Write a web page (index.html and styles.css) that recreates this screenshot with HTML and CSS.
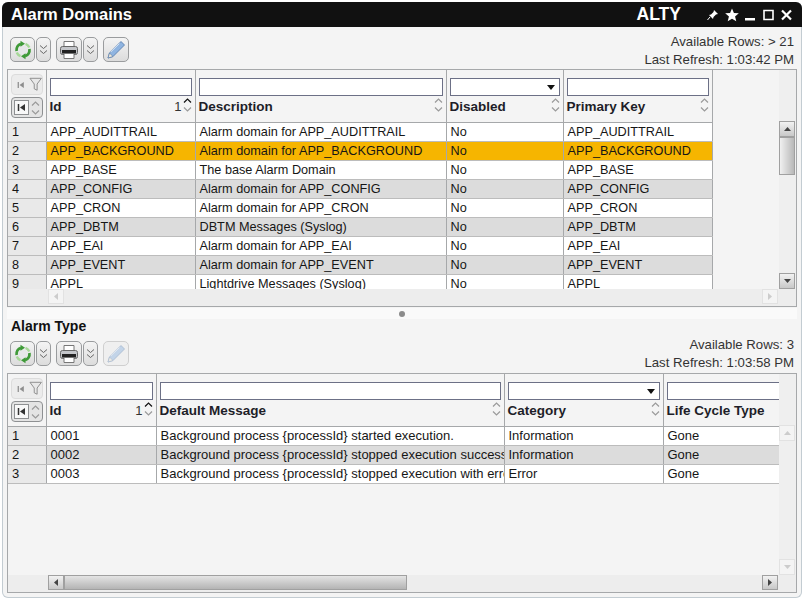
FILE: index.html
```html
<!doctype html>
<html>
<head>
<meta charset="utf-8">
<title>Alarm Domains</title>
<link rel="stylesheet" href="styles.css">
</head>
<body>
<svg class="defs" width="0" height="0">
	<defs>
		<symbol id="i-refresh" viewBox="0 0 20 20">
			<circle cx="10" cy="10" r="4.500" fill="#e6e7e8"/>
			<path d="M3.600 11A6.500 6.500 0 0 1 8 3.800" fill="none" stroke="#3f9a38" stroke-width="2.800"/>
			<path d="M7.500 .8l4.500 3-4.500 3z" fill="#3f9a38"/>
			<path d="M16.400 9A6.500 6.500 0 0 1 12 16.200" fill="none" stroke="#3f9a38" stroke-width="2.800"/>
			<path d="M12.500 19.200L8 16.200l4.500-3z" fill="#3f9a38"/>
			<path d="M12.500 3.900A6.500 6.500 0 0 1 16.300 7.500" fill="none" stroke="#a6d898" stroke-width="2.400"/>
			<path d="M7.500 16.100A6.500 6.500 0 0 1 3.700 12.500" fill="none" stroke="#a6d898" stroke-width="2.400"/>
		</symbol>
		<symbol id="i-print" viewBox="0 0 20 20">
			<path d="M5 1.500h10v6H5z" fill="#fff" stroke="#777"/>
			<rect x="1.500" y="6.500" width="17" height="8" rx="2" fill="#c4c6ca" stroke="#666"/>
			<rect x="3" y="10" width="14" height="3.500" fill="#222"/>
			<path d="M5 13.500h10v5H5z" fill="#fff" stroke="#777"/>
		</symbol>
		<symbol id="i-pencil" viewBox="0 0 20 20">
			<path d="M15 1.500l3.500 3.500L7 16.500l-5 1.500 1.500-5z" fill="#8fb4e0" stroke="#4f76a8" stroke-width=".8"/>
			<path d="M3.500 13L7 16.500 2 18z" fill="#efe8d8" stroke="#4f76a8" stroke-width=".6"/>
			<path d="M13.500 3.500L4.800 12" stroke="#d4e4f6" fill="none"/>
		</symbol>
		<symbol id="i-dbl" viewBox="0 0 9 11">
			<path d="M1 1.500l3.500 3 3.500-3M1 6.500l3.500 3 3.500-3" fill="none" stroke="#666" stroke-width="1"/>
		</symbol>
		<symbol id="i-funnel" viewBox="0 0 14 15">
			<path d="M1 1h12L8.500 7v6.500l-3-1.500V7z" fill="#e8e8e8" stroke="#8c8c8c"/>
		</symbol>
		<symbol id="i-first" viewBox="0 0 9 9">
			<path d="M1.500 1v7" stroke="#333" stroke-width="1.500"/>
			<path d="M8 1v7L3 4.500z" fill="#333"/>
		</symbol>
		<symbol id="i-up" viewBox="0 0 9 5">
			<path d="M1 4.500l3.500-3.500 3.500 3.500" fill="none" stroke="currentColor" stroke-width="1.200"/>
		</symbol>
		<symbol id="i-down" viewBox="0 0 9 5">
			<path d="M1 .5l3.500 3.500 3.500-3.500" fill="none" stroke="currentColor" stroke-width="1.200"/>
		</symbol>
		<symbol id="i-tri-up" viewBox="0 0 7 4">
			<path d="M3.500 0 7 4H0z" fill="currentColor"/>
		</symbol>
		<symbol id="i-tri-down" viewBox="0 0 7 4">
			<path d="M3.500 4 7 0H0z" fill="currentColor"/>
		</symbol>
	</defs>
</svg>

<div class="window">
	<div class="titlebar">
		<span class="title">Alarm Domains</span>
		<span class="user">ALTY</span>
		<div class="win-icons">
			<svg width="12" height="12" viewBox="0 0 12 12"><path d="M7 1l4 4-2 .5-2.500 2.500-.5 2-4-4 2-.5L6.500 3z" fill="#fff"/><path d="M3 8l-2.500 3" stroke="#fff"/></svg>
			<svg width="14" height="14" viewBox="0 0 16 15"><path d="M8 0l2.200 5.200 5.600.4-4.300 3.600 1.400 5.500L8 11.700 3.100 14.700l1.400-5.500L.2 5.600l5.600-.4z" fill="#fff"/></svg>
			<svg class="wi-min" width="11" height="12" viewBox="0 0 11 12"><path d="M0 9h10v2.500H0z" fill="#fff"/></svg>
			<svg class="wi-box" width="11" height="12" viewBox="0 0 11 12"><path d="M1 1.500h9v9H1z" fill="none" stroke="#fff" stroke-width="1.600"/></svg>
			<svg class="wi-box" width="11" height="12" viewBox="0 0 11 12"><path d="M1 1.500l9 9M10 1.500l-9 9" fill="none" stroke="#fff" stroke-width="2.200"/></svg>
		</div>
	</div>

	<div class="toolbar top-toolbar">
		<div class="tools">
			<span class="btn"><svg width="20" height="20"><use href="#i-refresh"/></svg></span>
			<span class="btn small"><svg width="9" height="11"><use href="#i-dbl"/></svg></span>
			<span class="btn gap"><svg width="20" height="20"><use href="#i-print"/></svg></span>
			<span class="btn small"><svg width="9" height="11"><use href="#i-dbl"/></svg></span>
			<span class="btn gap"><svg width="20" height="20"><use href="#i-pencil"/></svg></span>
		</div>
		<div class="info">
			<div>Available Rows: &gt; 21</div>
			<div>Last Refresh: 1:03:42 PM</div>
		</div>
	</div>

	<div class="grid grid-top">
		<div class="grid-main">
			<table class="data">
				<colgroup>
					<col class="c-num"><col class="c-id"><col class="c-desc"><col class="c-dis"><col class="c-key">
				</colgroup>
				<thead>
					<tr>
						<th class="corner">
							<div class="corner-a"><svg width="8" height="8"><use href="#i-first"/></svg><svg width="14" height="15"><use href="#i-funnel"/></svg></div>
							<div class="corner-b"><span class="first-box"><svg width="9" height="9"><use href="#i-first"/></svg></span><span class="spin"><svg width="9" height="5"><use href="#i-up"/></svg><svg width="9" height="5"><use href="#i-down"/></svg></span></div>
						</th>
						<th><div class="filter"></div><div class="label"><span>Id</span><span class="sort"><b>1</b><span class="spin"><svg class="dark" width="9" height="5"><use href="#i-up"/></svg><svg width="9" height="5"><use href="#i-down"/></svg></span></span></div></th>
						<th><div class="filter"></div><div class="label"><span>Description</span><span class="spin"><svg width="9" height="5"><use href="#i-up"/></svg><svg width="9" height="5"><use href="#i-down"/></svg></span></div></th>
						<th><div class="filter select"><i></i></div><div class="label"><span>Disabled</span><span class="spin"><svg width="9" height="5"><use href="#i-up"/></svg><svg width="9" height="5"><use href="#i-down"/></svg></span></div></th>
						<th><div class="filter"></div><div class="label"><span>Primary Key</span><span class="spin"><svg width="9" height="5"><use href="#i-up"/></svg><svg width="9" height="5"><use href="#i-down"/></svg></span></div></th>
					</tr>
				</thead>
				<tbody>
					<tr><td class="num">1</td><td>APP_AUDITTRAIL</td><td>Alarm domain for APP_AUDITTRAIL</td><td>No</td><td>APP_AUDITTRAIL</td></tr>
					<tr class="sel"><td class="num">2</td><td>APP_BACKGROUND</td><td>Alarm domain for APP_BACKGROUND</td><td>No</td><td>APP_BACKGROUND</td></tr>
					<tr><td class="num">3</td><td>APP_BASE</td><td>The base Alarm Domain</td><td>No</td><td>APP_BASE</td></tr>
					<tr class="alt"><td class="num">4</td><td>APP_CONFIG</td><td>Alarm domain for APP_CONFIG</td><td>No</td><td>APP_CONFIG</td></tr>
					<tr><td class="num">5</td><td>APP_CRON</td><td>Alarm domain for APP_CRON</td><td>No</td><td>APP_CRON</td></tr>
					<tr class="alt"><td class="num">6</td><td>APP_DBTM</td><td>DBTM Messages (Syslog)</td><td>No</td><td>APP_DBTM</td></tr>
					<tr><td class="num">7</td><td>APP_EAI</td><td>Alarm domain for APP_EAI</td><td>No</td><td>APP_EAI</td></tr>
					<tr class="alt"><td class="num">8</td><td>APP_EVENT</td><td>Alarm domain for APP_EVENT</td><td>No</td><td>APP_EVENT</td></tr>
					<tr><td class="num">9</td><td>APPL</td><td>Lightdrive Messages (Syslog)</td><td>No</td><td>APPL</td></tr>
				</tbody>
			</table>
		</div>
		<div class="vbar">
			<span class="sb-btn"><svg width="7" height="4"><use href="#i-tri-up"/></svg></span>
			<span class="v-thumb"></span>
			<span class="v-track"></span>
			<span class="sb-btn"><svg width="7" height="4"><use href="#i-tri-down"/></svg></span>
		</div>
		<div class="hbar">
			<span class="sb-btn h off"><svg width="4" height="7" viewBox="0 0 4 7"><path d="M4 0v7L0 3.500z" fill="currentColor"/></svg></span>
			<span class="h-track"></span>
			<span class="sb-btn h off"><svg width="4" height="7" viewBox="0 0 4 7"><path d="M0 0v7l4-3.500z" fill="currentColor"/></svg></span>
		</div>
	</div>

	<div class="splitter"><span class="dot"></span></div>

	<div class="section">Alarm Type</div>

	<div class="toolbar low-toolbar">
		<div class="tools">
			<span class="btn"><svg width="20" height="20"><use href="#i-refresh"/></svg></span>
			<span class="btn small"><svg width="9" height="11"><use href="#i-dbl"/></svg></span>
			<span class="btn gap"><svg width="20" height="20"><use href="#i-print"/></svg></span>
			<span class="btn small"><svg width="9" height="11"><use href="#i-dbl"/></svg></span>
			<span class="btn gap off"><svg width="20" height="20"><use href="#i-pencil"/></svg></span>
		</div>
		<div class="info">
			<div>Available Rows: 3</div>
			<div>Last Refresh: 1:03:58 PM</div>
		</div>
	</div>

	<div class="grid grid-low">
		<div class="grid-main">
			<table class="data">
				<colgroup>
					<col class="c-num"><col class="c-id2"><col class="c-msg"><col class="c-cat"><col class="c-life">
				</colgroup>
				<thead>
					<tr>
						<th class="corner">
							<div class="corner-a"><svg width="8" height="8"><use href="#i-first"/></svg><svg width="14" height="15"><use href="#i-funnel"/></svg></div>
							<div class="corner-b"><span class="first-box"><svg width="9" height="9"><use href="#i-first"/></svg></span><span class="spin"><svg width="9" height="5"><use href="#i-up"/></svg><svg width="9" height="5"><use href="#i-down"/></svg></span></div>
						</th>
						<th><div class="filter"></div><div class="label"><span>Id</span><span class="sort"><b>1</b><span class="spin"><svg class="dark" width="9" height="5"><use href="#i-up"/></svg><svg width="9" height="5"><use href="#i-down"/></svg></span></span></div></th>
						<th><div class="filter"></div><div class="label"><span>Default Message</span><span class="spin"><svg width="9" height="5"><use href="#i-up"/></svg><svg width="9" height="5"><use href="#i-down"/></svg></span></div></th>
						<th><div class="filter select"><i></i></div><div class="label"><span>Category</span><span class="spin"><svg width="9" height="5"><use href="#i-up"/></svg><svg width="9" height="5"><use href="#i-down"/></svg></span></div></th>
						<th class="open"><div class="filter"></div><div class="label"><span>Life Cycle Type</span></div></th>
					</tr>
				</thead>
				<tbody>
					<tr><td class="num">1</td><td>0001</td><td>Background process {processId} started execution.</td><td>Information</td><td class="open">Gone</td></tr>
					<tr class="alt"><td class="num">2</td><td>0002</td><td>Background process {processId} stopped execution successfully.</td><td>Information</td><td class="open">Gone</td></tr>
					<tr><td class="num">3</td><td>0003</td><td>Background process {processId} stopped execution with errors.</td><td>Error</td><td class="open">Gone</td></tr>
				</tbody>
			</table>
		</div>
		<div class="vbar">
			<span class="sb-btn off"><svg width="7" height="4"><use href="#i-tri-up"/></svg></span>
			<span class="v-track"></span>
			<span class="sb-btn off"><svg width="7" height="4"><use href="#i-tri-down"/></svg></span>
		</div>
		<div class="hbar">
			<span class="sb-btn h"><svg width="4" height="7" viewBox="0 0 4 7"><path d="M4 0v7L0 3.500z" fill="currentColor"/></svg></span>
			<span class="h-thumb"></span>
			<span class="h-track"></span>
			<span class="sb-btn h"><svg width="4" height="7" viewBox="0 0 4 7"><path d="M0 0v7l4-3.500z" fill="currentColor"/></svg></span>
		</div>
	</div>
</div>
</body>
</html>
```

FILE: styles.css
```css
body {
	margin: 0;
	background: #fff;
	font: 12.700px "Liberation Sans", Arial, sans-serif;
	color: #1a1a1a;
}
.defs {
	position: absolute;
}
.window {
	width: 800px;
	height: 596px;
	margin: 2px 0 0 2px;
	box-sizing: border-box;
	background: #f4f4f4;
	border: 1px solid #c3ccd2;
	border-top: 0;
	border-radius: 6px;
	padding: 0 4px;
}

/* title */
.titlebar {
	height: 25px;
	margin: 0 -5px;
	padding: 0 10px 0 9px;
	display: flex;
	align-items: center;
	background: #111;
	color: #fff;
	border-radius: 6px 6px 0 0;
}
.title {
	font-size: 16.500px;
	font-weight: bold;
	flex: 1;
}
.user {
	font-size: 17.500px;
	font-weight: bold;
	margin-right: 26px;
}
.win-icons {
	display: flex;
	align-items: center;
	gap: 6px;
}
.wi-box {
	margin-left: 1px;
}

/* toolbars */
.toolbar {
	display: flex;
	justify-content: space-between;
	align-items: flex-start;
}
.top-toolbar {
	height: 42px;
}
.top-toolbar .tools {
	padding-top: 10px;
}
.top-toolbar .info {
	padding-top: 6px;
}
.low-toolbar {
	height: 37px;
}
.low-toolbar .tools {
	padding-top: 5px;
}
.tools {
	display: flex;
	gap: 1px;
	padding-left: 3px;
}
.btn {
	width: 25px;
	height: 25px;
	box-sizing: border-box;
	display: flex;
	align-items: center;
	justify-content: center;
	border: 1px solid #9a9c9e;
	border-radius: 5px;
	background: linear-gradient(#f4f4f4, #dcdcdc);
}
.btn.small {
	width: 15px;
}
.btn.gap {
	margin-left: 4px;
	width: 26px;
}
.btn.off {
	border-color: #cfcfcf;
	background: #efefef;
}
.btn.off svg {
	opacity: .45;
}
.info {
	font-size: 13.200px;
	line-height: 18px;
	text-align: right;
	color: #333;
	padding-right: 3px;
}

/* grids */
.grid {
	border: 1px solid #a6a8aa;
	box-sizing: border-box;
	display: grid;
	grid-template-columns: 771px 17px;
	grid-template-rows: 1fr 17px;
}
.grid-top {
	height: 238px;
}
.grid-low {
	height: 220px;
}
.grid-main {
	overflow: hidden;
}
.data {
	border-collapse: collapse;
	table-layout: fixed;
	width: 704px;
}
.grid-low .data {
	width: 805px;
}
.grid-low td {
	font-size: 13px;
}
.c-num { width: 38px; }
.c-id { width: 149px; }
.c-desc { width: 251px; }
.c-dis { width: 117px; }
.c-key { width: 149px; }
.c-id2 { width: 110px; }
.c-msg { width: 348px; }
.c-cat { width: 159px; }
.c-life { width: 150px; }
.data th,
.data td {
	border-right: 1px solid #a6a8aa;
	padding: 0;
}
.data th {
	height: 52px;
	box-sizing: border-box;
	border-bottom: 1px solid #a6a8aa;
	padding: 8px 3px 0;
	vertical-align: top;
	text-align: left;
}
.data th.corner {
	padding: 4px 3px 0;
}
.data td {
	height: 19px;
	padding: 0 3px 0 4px;
	background: #fff;
	border-bottom: 1px solid #bcbcbc;
	white-space: nowrap;
	overflow: hidden;
	color: #161616;
	box-sizing: border-box;
}
.data tr.alt td {
	background: #dcdcdc;
}
.data tr.sel td {
	background: #f6b500;
}
.data tr td.num {
	background: #e9e9e9;
}
.data .open {
	border-right: 0;
}
.filter {
	height: 18px;
	box-sizing: border-box;
	background: #fff;
	border: 1px solid #6c7086;
	position: relative;
}
.filter.select i {
	position: absolute;
	right: 4px;
	top: 6px;
	border: 4px solid transparent;
	border-top: 5px solid #111;
	border-bottom: 0;
}
.label {
	display: flex;
	justify-content: space-between;
	align-items: center;
	height: 21px;
	font-size: 13.500px;
	font-weight: bold;
	color: #1e1e28;
}
.sort {
	display: flex;
	align-items: center;
	gap: 1px;
}
.sort b {
	font-size: 13px;
	font-weight: normal;
	color: #333;
}
.spin {
	display: flex;
	flex-direction: column;
	gap: 4px;
	color: #9a9a9a;
}
.label .spin {
	margin-top: -4px;
}
.spin svg {
	display: block;
}
.spin .dark {
	color: #111;
}
.corner-a,
.corner-b {
	display: flex;
	align-items: center;
	box-sizing: border-box;
	border-radius: 4px;
	margin: 0 0 2px 0;
	width: 32px;
}
.corner-a {
	height: 21px;
	gap: 4px;
	padding-left: 5px;
	background: #ececec;
	border: 1px solid #dcdcdc;
}
.corner-a svg:first-child {
	opacity: .5;
}
.corner-b {
	height: 21px;
	gap: 2px;
	padding-left: 2px;
	border: 1px solid #8e9092;
	background: #e4e4e4;
}
.first-box {
	width: 15px;
	height: 15px;
	box-sizing: border-box;
	border: 1px solid #8e9092;
	background: #f8f8f8;
	display: flex;
	align-items: center;
	justify-content: center;
}

/* scrollbars */
.vbar {
	display: flex;
	flex-direction: column;
	background: #efefef;
	padding-top: 51px;
}
.sb-btn {
	width: 16px;
	height: 16px;
	flex: none;
	box-sizing: border-box;
	display: flex;
	align-items: center;
	justify-content: center;
	border: 1px solid #a0a0a0;
	background: linear-gradient(#f2f2f2, #c8c8c8);
	color: #444;
}
.sb-btn.off {
	border-color: #e2e2e2;
	background: #f4f4f4;
	color: #ccc;
}
.v-thumb {
	height: 38px;
	width: 16px;
	flex: none;
	box-sizing: border-box;
	border: 1px solid #a0a0a0;
	background: linear-gradient(90deg, #f0f0f0, #b8b8b8);
}
.v-track,
.h-track {
	flex: 1;
}
.hbar {
	grid-column: 1 / 3;
	display: flex;
	padding: 0 18px 0 40px;
	background: #ededed;
}
.sb-btn.h {
	height: 15px;
}
.h-thumb {
	width: 343px;
	height: 15px;
	flex: none;
	box-sizing: border-box;
	border: 1px solid #a0a0a0;
	background: linear-gradient(#e4e4e4, #b4b4b4);
}

/* divider */
.splitter {
	height: 11px;
	display: flex;
	align-items: center;
	justify-content: center;
	background: #fafafa;
	margin-top: 1px;
}
.dot {
	width: 6px;
	height: 6px;
	border-radius: 50%;
	background: #8c8c8c;
}
.section {
	height: 17px;
	line-height: 15px;
	padding-left: 4px;
	font-size: 14px;
	font-weight: bold;
	color: #111;
}
```
